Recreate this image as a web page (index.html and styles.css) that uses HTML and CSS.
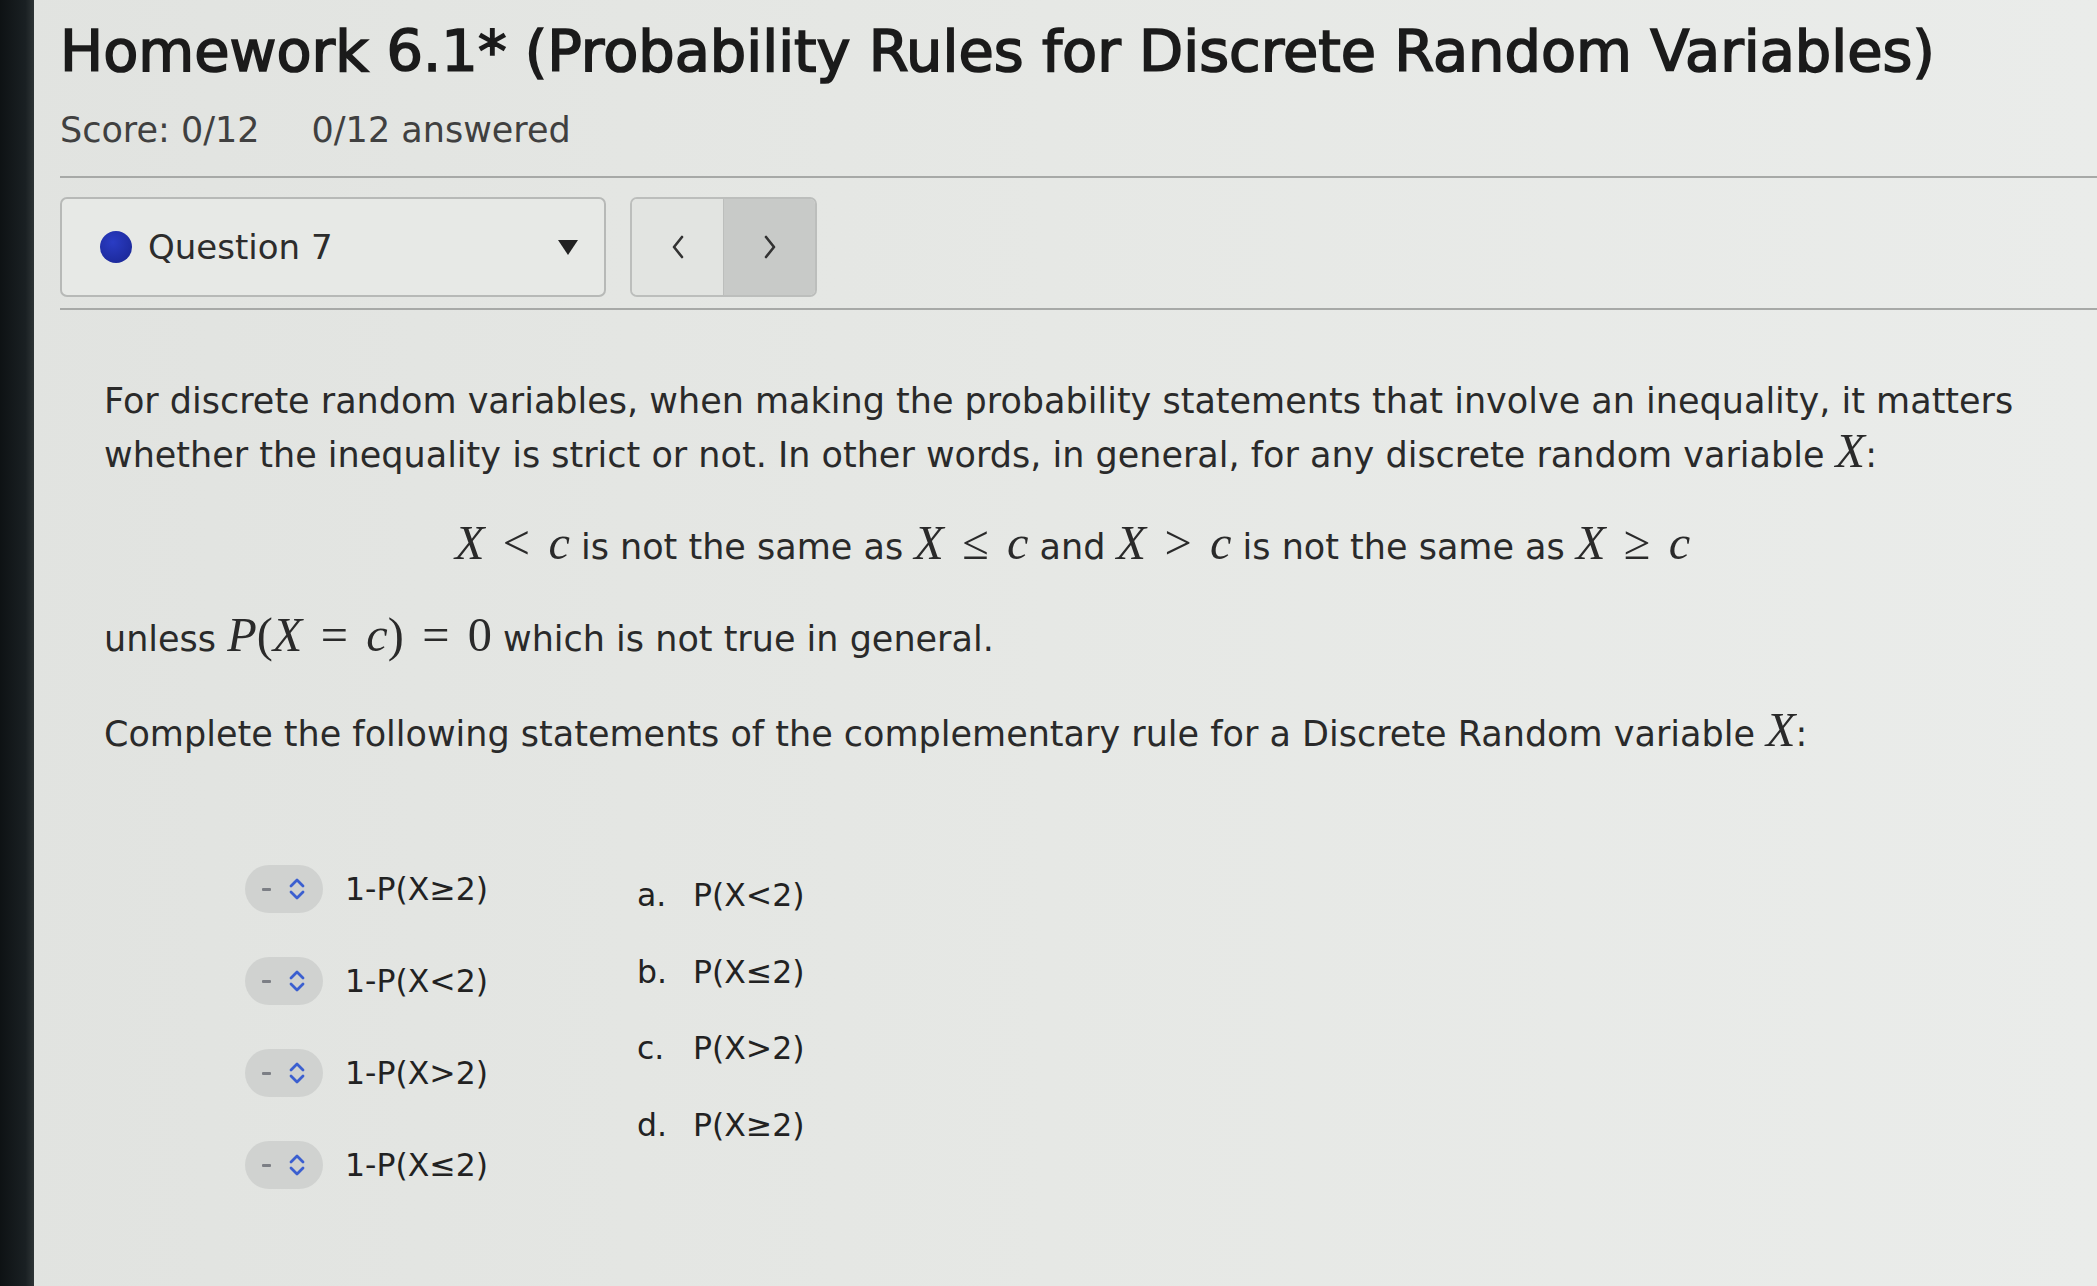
FILE: index.html
```html
<!DOCTYPE html>
<html lang="en">
<head>
<meta charset="utf-8">
<title>Homework 6.1*</title>
<link rel="stylesheet" href="styles.css">
</head>
<body>
<div class="screen">
  <div class="bezel"></div>
  <div class="main">
    <h1 class="title">Homework 6.1* (Probability Rules for Discrete Random Variables)</h1>
    <div class="score"><span>Score: 0/12</span><span class="answered">0/12 answered</span></div>
    <div class="rule"></div>
    <div class="toolbar">
      <div class="qselect">
        <span class="dot"></span>
        <span class="qlabel">Question 7</span>
        <span class="caret"></span>
      </div>
      <div class="nav">
        <div class="navbtn prev">
          <svg width="20" height="30" viewBox="0 0 20 30"><polyline points="14,5 6,15 14,25" fill="none" stroke="#333" stroke-width="2.6" stroke-linecap="round" stroke-linejoin="round"/></svg>
        </div>
        <div class="navbtn next">
          <svg width="20" height="30" viewBox="0 0 20 30"><polyline points="6,5 14,15 6,25" fill="none" stroke="#333" stroke-width="2.6" stroke-linecap="round" stroke-linejoin="round"/></svg>
        </div>
      </div>
    </div>
    <div class="rule"></div>

    <div class="question">
      <p class="para">For discrete random variables, when making the probability statements that involve an inequality, it matters<br>whether the inequality is strict or not. In other words, in general, for any discrete random variable <span class="m">X</span>:</p>
      <p class="mathline"><span class="m">X</span><span class="op">&lt;</span><span class="m">c</span> is not the same as <span class="m">X</span><span class="op">≤</span><span class="m">c</span> and <span class="m">X</span><span class="op">&gt;</span><span class="m">c</span> is not the same as <span class="m">X</span><span class="op">≥</span><span class="m">c</span></p>
      <p class="unless">unless <span class="m">P</span><span class="mu">(</span><span class="m">X</span><span class="op">=</span><span class="m">c</span><span class="mu">)</span><span class="op">=</span><span class="mu">0</span> which is not true in general.</p>
      <p class="complete">Complete the following statements of the complementary rule for a Discrete Random variable <span class="m">X</span>:</p>

      <div class="matching">
        <div class="leftcol">
          <div class="row"><span class="pill"><span class="dash"></span><svg class="updown" width="20" height="28" viewBox="0 0 20 28"><polyline points="4,11 10,5 16,11" fill="none" stroke="#3b5fd0" stroke-width="2.8" stroke-linecap="round" stroke-linejoin="round"/><polyline points="4,17 10,23 16,17" fill="none" stroke="#3b5fd0" stroke-width="2.8" stroke-linecap="round" stroke-linejoin="round"/></svg></span><span class="opt">1-P(X≥2)</span></div>
          <div class="row"><span class="pill"><span class="dash"></span><svg class="updown" width="20" height="28" viewBox="0 0 20 28"><polyline points="4,11 10,5 16,11" fill="none" stroke="#3b5fd0" stroke-width="2.8" stroke-linecap="round" stroke-linejoin="round"/><polyline points="4,17 10,23 16,17" fill="none" stroke="#3b5fd0" stroke-width="2.8" stroke-linecap="round" stroke-linejoin="round"/></svg></span><span class="opt">1-P(X&lt;2)</span></div>
          <div class="row"><span class="pill"><span class="dash"></span><svg class="updown" width="20" height="28" viewBox="0 0 20 28"><polyline points="4,11 10,5 16,11" fill="none" stroke="#3b5fd0" stroke-width="2.8" stroke-linecap="round" stroke-linejoin="round"/><polyline points="4,17 10,23 16,17" fill="none" stroke="#3b5fd0" stroke-width="2.8" stroke-linecap="round" stroke-linejoin="round"/></svg></span><span class="opt">1-P(X&gt;2)</span></div>
          <div class="row"><span class="pill"><span class="dash"></span><svg class="updown" width="20" height="28" viewBox="0 0 20 28"><polyline points="4,11 10,5 16,11" fill="none" stroke="#3b5fd0" stroke-width="2.8" stroke-linecap="round" stroke-linejoin="round"/><polyline points="4,17 10,23 16,17" fill="none" stroke="#3b5fd0" stroke-width="2.8" stroke-linecap="round" stroke-linejoin="round"/></svg></span><span class="opt">1-P(X≤2)</span></div>
        </div>
        <div class="rightcol">
          <div class="ans"><span class="letter">a.</span><span class="opt">P(X&lt;2)</span></div>
          <div class="ans"><span class="letter">b.</span><span class="opt">P(X≤2)</span></div>
          <div class="ans"><span class="letter">c.</span><span class="opt">P(X&gt;2)</span></div>
          <div class="ans"><span class="letter">d.</span><span class="opt">P(X≥2)</span></div>
        </div>
      </div>
    </div>
  </div>
</div>
</body>
</html>
```

FILE: styles.css
```css
html, body {
  margin: 0;
  padding: 0;
  width: 2097px;
  height: 1286px;
  overflow: hidden;
}
body {
  background: #e4e6e3;
  font-family: "DejaVu Sans", Verdana, sans-serif;
  color: #2a2a2a;
}
.screen {
  display: flex;
  height: 1286px;
  background: linear-gradient(90deg, #e1e3e0 0%, #e6e8e5 50%, #eaecea 100%);
}
.bezel {
  width: 34px;
  flex: none;
  background: linear-gradient(90deg, #0e1214 0%, #1a2023 75%, #2e3436 100%);
}
.main {
  flex: 1;
  padding-left: 26px;
}
.title {
  margin: 17px 0 0 0;
  font-size: 57.4px;
  line-height: 70px;
  font-weight: 400;
  -webkit-text-stroke: 1.7px #1b1b1b;
  color: #1b1b1b;
  white-space: nowrap;
}
.score {
  margin-top: 22px;
  font-size: 35px;
  line-height: 42px;
  color: #404040;
  display: flex;
  gap: 52px;
}
.rule {
  height: 2px;
  background: #a7a9a7;
}
.score + .rule {
  margin-top: 25px;
}
.toolbar {
  display: flex;
  gap: 24px;
  margin-top: 19px;
  height: 100px;
}
.toolbar + .rule {
  margin-top: 11px;
}
.qselect {
  width: 546px;
  height: 100px;
  box-sizing: border-box;
  border: 2px solid #b7b9b7;
  border-radius: 7px;
  background: #e7e9e6;
  display: flex;
  align-items: center;
  padding-left: 38px;
  padding-right: 26px;
}
.dot {
  width: 32px;
  height: 32px;
  border-radius: 50%;
  background: radial-gradient(circle at 40% 35%, #2a3cc4 0%, #18248f 100%);
  flex: none;
}
.qlabel {
  font-size: 34px;
  margin-left: 16px;
  color: #2c2c2c;
  flex: 1;
}
.caret {
  width: 0;
  height: 0;
  border-left: 10px solid transparent;
  border-right: 10px solid transparent;
  border-top: 15px solid #222;
}
.nav {
  display: flex;
  width: 187px;
  height: 100px;
  box-sizing: border-box;
  border: 2px solid #bcbebc;
  border-radius: 7px;
  overflow: hidden;
}
.navbtn {
  flex: 1;
  display: flex;
  align-items: center;
  justify-content: center;
}
.navbtn.prev {
  background: #e2e4e1;
}
.navbtn.next {
  background: #c8cac8;
  border-left: 1px solid #bcbebc;
}
.question {
  padding-left: 44px;
  font-size: 35px;
  line-height: 52px;
  color: #2a2a2a;
}
.question p {
  margin: 0;
}
.para {
  margin-top: 65px !important;
  white-space: nowrap;
}
.mathline {
  margin-top: 38px !important;
  text-align: center;
  padding-right: 56px;
  white-space: nowrap;
}
.unless {
  margin-top: 38px !important;
}
.complete {
  margin-top: 41px !important;
}
.m {
  font-family: "Liberation Serif", "DejaVu Serif", serif;
  font-style: italic;
  font-size: 1.38em;
  line-height: 1;
}
.mu {
  font-family: "Liberation Serif", "DejaVu Serif", serif;
  font-size: 1.38em;
  line-height: 1;
}
.op {
  font-family: "Liberation Serif", "DejaVu Serif", serif;
  font-size: 1.38em;
  line-height: 1;
  margin: 0 0.38em;
}
.matching {
  display: flex;
  margin-top: 104px;
  padding-left: 141px;
}
.leftcol {
  display: flex;
  flex-direction: column;
  gap: 42px;
  width: 392px;
}
.row {
  display: flex;
  align-items: center;
  height: 50px;
}
.pill {
  width: 78px;
  height: 48px;
  border-radius: 24px;
  background: #d0d2d0;
  display: flex;
  align-items: center;
  justify-content: center;
  gap: 16px;
  flex: none;
}
.dash {
  width: 9px;
  height: 3px;
  background: #7c7f85;
  border-radius: 1px;
}
.opt {
  font-size: 31.5px;
  color: #222;
}
.row .opt {
  margin-left: 22px;
}
.rightcol {
  display: flex;
  flex-direction: column;
  gap: 26.5px;
  margin-top: 6px;
}
.ans {
  display: flex;
  align-items: center;
  height: 50px;
}
.letter {
  font-size: 31.5px;
  width: 56px;
  color: #222;
}
```
